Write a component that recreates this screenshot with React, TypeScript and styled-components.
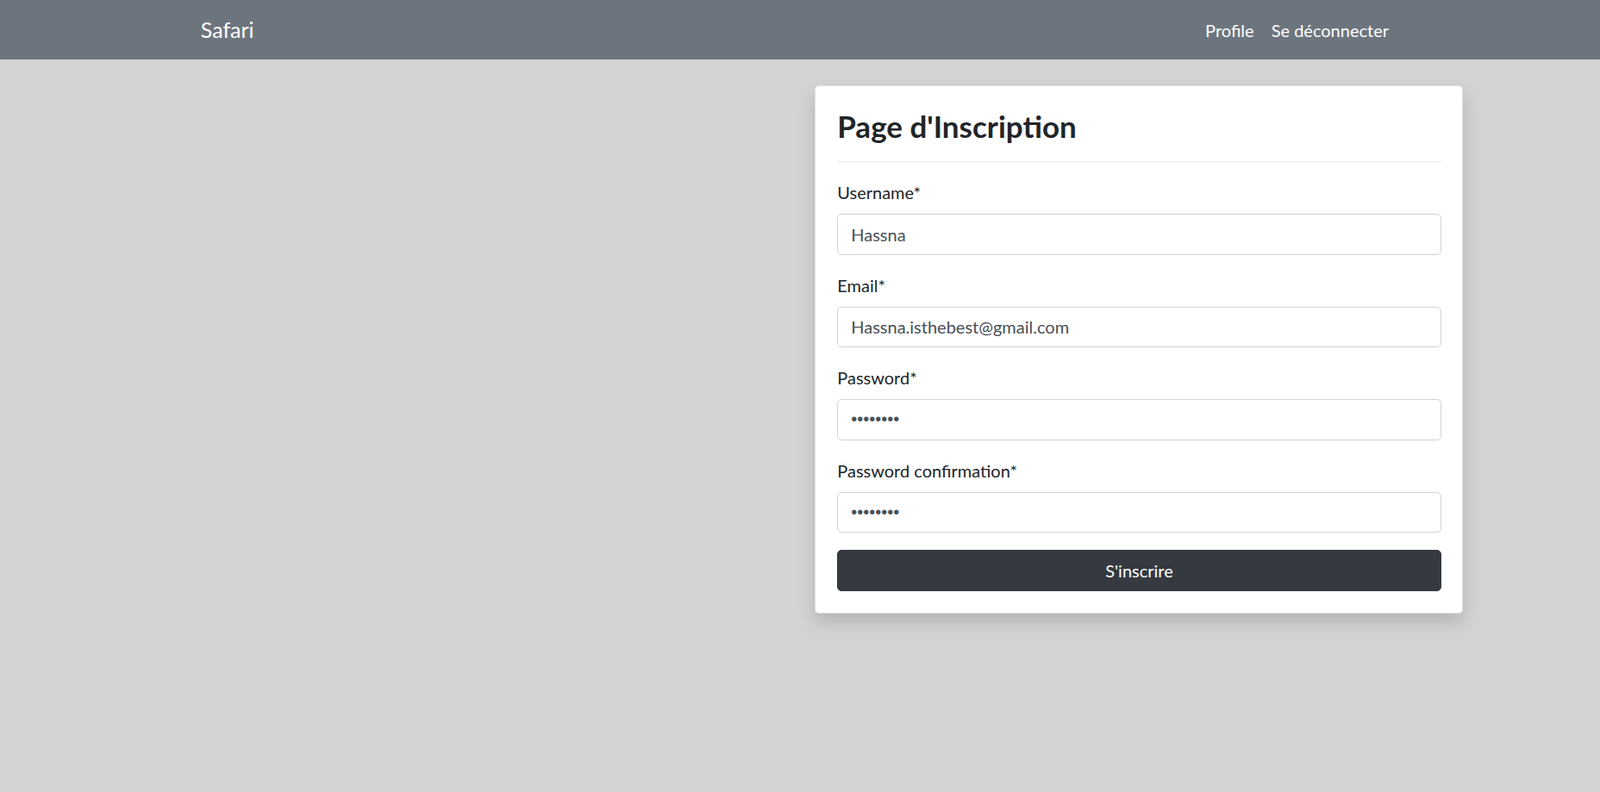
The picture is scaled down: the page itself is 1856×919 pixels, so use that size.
import React from 'react';
import styled, { createGlobalStyle } from 'styled-components';

const GlobalStyle = createGlobalStyle`
  * {
    box-sizing: border-box;
  }

  html, body {
    margin: 0;
    padding: 0;
  }

  body {
    background-color: #d3d3d3;
    color: #212529;
    font-family: "Segoe UI", Lato, "Noto Sans", sans-serif;
    font-size: 20px;
    line-height: 1.5;
    min-height: 919px;
  }
`;

const fields = [
  { id: 'username', label: 'Username*', type: 'text', value: 'Hassna' },
  { id: 'email', label: 'Email*', type: 'email', value: 'Hassna.isthebest@gmail.com' },
  { id: 'password', label: 'Password*', type: 'password', value: 'password' },
  { id: 'confirmation', label: 'Password confirmation*', type: 'password', value: 'password' },
];

const App: React.FC = () => {
  return (
    <>
      <GlobalStyle />
      <Navbar>
        <NavContainer>
          <Brand href="#">Safari</Brand>
          <NavLinks>
            <NavLink href="#">Profile</NavLink>
            <NavLink href="#">Se déconnecter</NavLink>
          </NavLinks>
        </NavContainer>
      </Navbar>
      <Row>
        <Column />
        <Column>
          <Card>
            <Title>Page d'Inscription</Title>
            <Divider />
            <form onSubmit={e => e.preventDefault()}>
              {fields.map(field => (
                <FormGroup key={field.id}>
                  <Label htmlFor={field.id}>{field.label}</Label>
                  <Input
                    id={field.id}
                    type={field.type}
                    defaultValue={field.value}
                    $secret={field.type === 'password'}
                  />
                </FormGroup>
              ))}
              <SubmitButton type="submit">S'inscrire</SubmitButton>
            </form>
          </Card>
        </Column>
      </Row>
    </>
  );
};

export default App;

const Navbar = styled.nav`
  background-color: #6c757d;
  height: 69px;
  display: flex;
  align-items: center;
`;

const NavContainer = styled.div`
  width: 1428px;
  margin: 0 auto;
  padding: 0 21px 0 18.75px;
  display: flex;
  align-items: center;
  justify-content: space-between;
`;

const Brand = styled.a`
  color: #fff;
  font-size: 25px;
  line-height: 37.5px;
  text-decoration: none;
`;

const NavLinks = styled.div`
  display: flex;
  align-items: center;
`;

const NavLink = styled.a`
  color: #fff;
  font-size: 20px;
  line-height: 30px;
  padding: 0 10px;
  text-decoration: none;

  &:hover {
    color: rgba(255, 255, 255, 0.75);
  }
`;

const Row = styled.div`
  display: flex;
  padding-top: 30px;
`;

const Column = styled.div`
  flex: 0 0 50%;
  padding: 0 17.25px;
`;

const Card = styled.div`
  width: 752px;
  background-color: #fff;
  border: 1.25px solid rgba(0, 0, 0, 0.125);
  border-radius: 5px;
  padding: 25px 24.5px 25px 25px;
  box-shadow: 0 10px 20px rgba(0, 0, 0, 0.15);
`;

const Title = styled.h3`
  margin: 0;
  font-size: 35px;
  font-weight: 700;
  line-height: 42px;
`;

const Divider = styled.hr`
  margin: 20px 0;
  border: 0;
  border-top: 1.25px solid rgba(0, 0, 0, 0.1);
`;

const FormGroup = styled.div`
  margin-bottom: 20px;
`;

const Label = styled.label`
  display: block;
  margin-bottom: 10px;
  font-size: 20px;
  line-height: 30px;
`;

const Input = styled.input<{ $secret?: boolean }>`
  display: block;
  width: 100%;
  height: 47.5px;
  padding: 7.5px 15px;
  font-family: ${p => (p.$secret ? '"Liberation Sans", Arial, sans-serif' : 'inherit')};
  font-size: 20px;
  line-height: 30px;
  color: #495057;
  background-color: #fff;
  border: 1.25px solid #ced4da;
  border-radius: 5px;
  outline: none;

  &:focus {
    border-color: #80bdff;
    box-shadow: 0 0 0 4px rgba(0, 123, 255, 0.25);
  }
`;

const SubmitButton = styled.button`
  display: block;
  width: 100%;
  height: 47.5px;
  padding: 7.5px 15px;
  font-family: inherit;
  font-size: 20px;
  line-height: 30px;
  color: #fff;
  background-color: #343a40;
  border: 1.25px solid #343a40;
  border-radius: 5px;
  cursor: pointer;

  &:hover {
    background-color: #23272b;
  }
`;
